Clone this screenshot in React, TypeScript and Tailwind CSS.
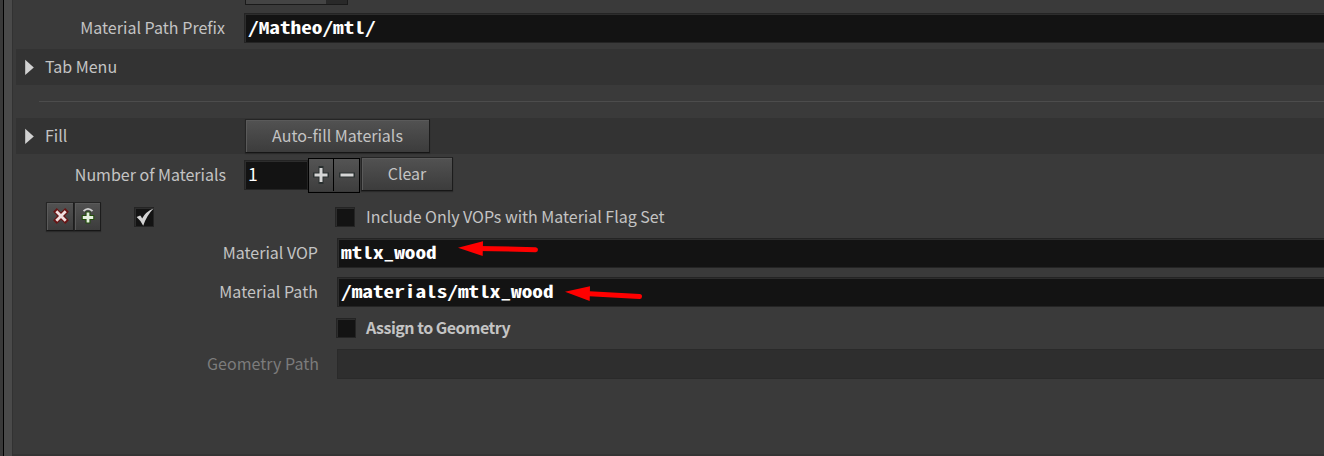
import React from "react";

const SANS = "font-['Noto_Sans_CJK_SC','Noto_Sans',sans-serif]";
const MONO = "font-['Noto_Sans_Mono_CJK_SC','DejaVu_Sans_Mono',monospace]";

function Label({ children, className = "" }: { children: React.ReactNode; className?: string }) {
  return (
    <span className={`flex h-full shrink-0 items-center justify-end whitespace-pre ${className}`}>{children}</span>
  );
}

function Field({ children, className = "" }: { children?: React.ReactNode; className?: string }) {
  return (
    <div
      className={`flex h-[30px] items-center overflow-hidden border border-[#242424] bg-[#131313] pb-0.5 pl-[3px] whitespace-pre text-white shadow-[inset_1px_1px_0_#2d2d2d] ${className}`}
    >
      {children}
    </div>
  );
}

function Code({ children }: { children: React.ReactNode }) {
  return (
    <span className={`inline-block origin-left scale-x-[1.306] text-[16.3px] font-bold ${MONO}`}>{children}</span>
  );
}

function Check({ checked, className = "" }: { checked?: boolean; className?: string }) {
  return (
    <span className={`h-5 w-5 shrink-0 border border-[#242424] bg-[#131313] shadow-[inset_1px_1px_0_#2d2d2d] ${className}`}>
      {checked && (
        <svg viewBox="0 0 18 18" className="h-[18px] w-[18px] overflow-visible">
          <path d="M1.6 9 L5.2 7.6 Q6.4 8.6 7.1 10.5 Q10.7 3.8 18.5 0.6 Q11.7 7.5 8.2 17.8 Q5.8 12.5 1.6 9Z" fill="#d4d4d4" />
        </svg>
      )}
    </span>
  );
}

function Button({ children, className = "" }: { children: React.ReactNode; className?: string }) {
  return (
    <button
      className={`flex shrink-0 items-center justify-center border border-t-[#252525] border-r-[#1c1c1c] border-b-[#161616] border-l-[#252525] bg-linear-to-b from-[#525252] to-[#3c3c3c] pb-0.5 whitespace-pre shadow-[inset_1px_1px_0_#5a5a5a,0_1px_1px_#2a2a2a] ${className}`}
    >
      {children}
    </button>
  );
}

function Triangle() {
  return (
    <svg viewBox="0 0 9 16" className="ml-[9px] h-4 w-[9px] shrink-0">
      <path d="M0.2 0.8 L8.8 8.5 L0.2 16Z" fill="#d2d2d2" />
    </svg>
  );
}

function Arrow({ className, tip, tail }: { className: string; tip: number; tail: [number, number] }) {
  return (
    <svg viewBox="0 0 80 18" className={`pointer-events-none absolute h-[18px] w-20 overflow-visible ${className}`}>
      <line x1="20" y1="7.4" x2={tail[0]} y2={tail[1]} stroke="#f00" strokeWidth="5" strokeLinecap="round" />
      <path d={`M0 ${tip} L25 0.2 L24.7 15Z`} fill="#f00" />
    </svg>
  );
}

export default function App() {
  return (
    <div className={`flex h-[456px] w-[1324px] overflow-hidden bg-[#3a3a3a] text-[16px] leading-none text-[#c4c4c4] ${SANS}`}>
      <div className="h-full w-[3px] shrink-0 bg-[#393939]" />
      <div className="h-full w-px shrink-0 bg-black" />
      <div className="h-full w-2 shrink-0 bg-[#4a4a4a]" />
      <div className="h-full w-px shrink-0 bg-[#323232]" />
      <main className="flex min-w-0 grow flex-col border-b-2 border-[#343434] pl-[3px]">
        <div className="flex h-[13px] shrink-0 items-start pl-[229px]">
          <div className="flex h-[5px] w-[103px] border border-t-0 border-[#1a1a1a] bg-[#444]">
            <div className="h-full w-20" />
            <div className="h-full grow bg-[#292929]" />
          </div>
        </div>

        <div className="flex h-[30px] shrink-0">
          <Label className="w-[209px] pb-0.5 tracking-[0.03px]">Material Path Prefix</Label>
          <Field className="ml-[19px] grow border-r-0">
            <Code>/Matheo/mtl/</Code>
          </Field>
        </div>

        <div className="mt-1.5 flex h-9 shrink-0 items-center bg-[#333]">
          <Triangle />
          <span className="ml-[11px] pb-0.5">Tab Menu</span>
        </div>

        <div className="mt-4 ml-[23px] h-px shrink-0 bg-[#4c4c4c]" />

        <div className="mt-4 flex h-9 shrink-0 items-center bg-[#333]">
          <Triangle />
          <span className="ml-[11px] w-[200px] pb-0.5">Fill</span>
          <Button className="h-[34px] w-[185px]">Auto-fill Materials</Button>
        </div>

        <div className="mt-[3px] flex h-9 shrink-0 items-start">
          <Label className="w-[210px] pb-0.5">Number of Materials</Label>
          <Field className="mt-[3px] ml-[18px] w-16 text-[17.5px]">1</Field>
          <div className="mt-px flex h-[35px] w-[52px] border border-black pb-px">
            <span className="flex w-[25px] items-center justify-center border-r border-black bg-linear-to-b from-[#545454] to-[#3e3e3e]">
              <svg viewBox="0 0 16 18" className="h-[18px] w-4">
                <path d="M8 2.5 V15.5 M2 9 H14" stroke="#2a3030" strokeWidth="5" strokeLinecap="square" fill="none" />
                <path d="M8 2 V16 M1.5 9 H14.5" stroke="#d6d6d6" strokeWidth="3" fill="none" />
              </svg>
            </span>
            <span className="flex grow items-center justify-center bg-linear-to-b from-[#545454] to-[#3e3e3e]">
              <svg viewBox="0 0 16 18" className="ml-px h-[18px] w-4">
                <path d="M2.5 9 H13.5" stroke="#2a3030" strokeWidth="5" strokeLinecap="square" />
                <path d="M1.5 9 H14.5" stroke="#d6d6d6" strokeWidth="3" />
              </svg>
            </span>
          </div>
          <Button className="ml-px h-[34px] w-[92px]">Clear</Button>
        </div>

        <div className="mt-[9px] flex h-[29px] shrink-0 items-start">
          <div className="ml-[30px] flex w-[55px]">
            <Button className="h-[29px] w-[28px]">
              <svg viewBox="0 0 16 16" className="ml-0.5 h-4 w-4">
                <path d="M3.8 3.8 L12.2 12.2 M12.2 3.8 L3.8 12.2" stroke="#681414" strokeWidth="5.2" strokeLinecap="square" />
                <path d="M3.3 3.3 L12.7 12.7 M12.7 3.3 L3.3 12.7" stroke="#f0dede" strokeWidth="2.8" />
              </svg>
            </Button>
            <Button className="h-[29px] w-[27px]">
              <svg viewBox="0 0 16 18" className="h-[18px] w-4">
                <path d="M3.5 4.2 Q8 -0.6 12.5 4.2" stroke="#d0d0d0" strokeWidth="1.8" fill="none" />
                <path d="M8 7 V14 M4.2 10.5 H11.8" stroke="#234d0c" strokeWidth="5" strokeLinecap="square" />
                <path d="M8 5.5 V15.5 M2.8 10.5 H13.2" stroke="#e6f0e0" strokeWidth="2.8" />
              </svg>
            </Button>
          </div>
          <Check checked className="mt-[5px] ml-[33px]" />
          <Check className="mt-[5px] ml-[181px]" />
          <Label className="ml-[11px] pb-0.5 tracking-[-0.02px]">Include Only VOPs with Material Flag Set</Label>
        </div>

        <div className="relative mt-[7px] flex h-[30px] shrink-0">
          <Label className="w-[302px] pb-0.5">Material VOP</Label>
          <Field className="ml-[19px] grow border-r-0">
            <Code>mtlx_wood</Code>
          </Field>
          <Arrow className="top-[3px] left-[442px]" tip={6.7} tail={[77.5, 8.7]} />
        </div>

        <div className="relative mt-[9px] flex h-[30px] shrink-0">
          <Label className="w-[302px] pb-0.5 tracking-[0.05px]">Material Path</Label>
          <Field className="ml-[19px] grow border-r-0">
            <Code>/materials/mtlx_wood</Code>
          </Field>
          <Arrow className="top-[9px] left-[549px]" tip={5.7} tail={[74.5, 10.5]} />
        </div>

        <div className="mt-[11px] flex h-5 shrink-0">
          <Check className="ml-[320px]" />
          <Label className="ml-2.5 pb-0.5 font-bold tracking-[-0.5px]">Assign to Geometry</Label>
        </div>

        <div className="mt-[11px] flex h-[30px] shrink-0">
          <Label className="w-[303px] pb-0.5 tracking-[0.03px] text-[#7c7c7c]">Geometry Path</Label>
          <div className="ml-[18px] grow border-y border-l border-[#2a2a2a] bg-[#2e2e2e]" />
        </div>
      </main>
    </div>
  );
}
